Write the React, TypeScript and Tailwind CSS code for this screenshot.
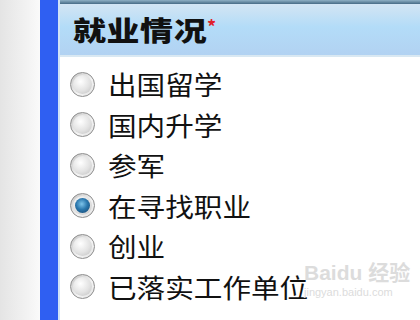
import React from "react";

const options = [
  { label: "出国留学", checked: false },
  { label: "国内升学", checked: false },
  { label: "参军", checked: false },
  { label: "在寻找职业", checked: true },
  { label: "创业", checked: false },
  { label: "已落实工作单位", checked: false },
];

function Radio({ checked }: { checked: boolean }) {
  return (
    <span className="flex h-[25px] w-[25px] shrink-0 items-center justify-center rounded-full border border-[#8e8e8e] bg-[linear-gradient(135deg,#c4c4c4,#f4f4f4_60%,#e0e0e0)]">
      <span className="flex h-[19px] w-[19px] items-center justify-center rounded-full bg-[radial-gradient(circle_at_40%_35%,#ffffff,#e2e2e2_55%,#bdbdbd)]">
        {checked && (
          <span className="h-[15px] w-[15px] rounded-full bg-[radial-gradient(circle_at_45%_40%,#7ec4ea,#2b78ae_45%,#123f66)]" />
        )}
      </span>
    </span>
  );
}

export default function App() {
  return (
    <div
      className="relative flex h-[320px] w-[420px] overflow-hidden bg-white text-[#111]"
      style={{ fontFamily: '"Noto Sans CJK SC", "Noto Sans", sans-serif' }}
    >
      <div className="w-[40px] shrink-0 bg-[linear-gradient(90deg,#e4e4e4,#f3f3f3_70%,#fafafa)]" />
      <div className="w-[18px] shrink-0 bg-[#2f5ff2]" />
      <div className="flex flex-1 flex-col border-l-2 border-[#cfe3f7]">
        <div className="h-[4px] bg-[linear-gradient(180deg,#8fb0c4,#476b85)]" />
        <div className="flex h-[53px] items-center border-b-2 border-[#d9e8f2] bg-[linear-gradient(180deg,#d3e5f3,#b3dcf8_45%,#b2d2f2)] pl-[13px]">
          <span className="inline-block w-[110px] origin-left scale-x-[1.22] text-[27px] font-black leading-none tracking-[0.5px]">
            就业情况
          </span>
          <span className="ml-[24px] mt-[-8px] text-[18px] font-bold leading-none text-[#e0202a]">*</span>
        </div>
        <ul className="flex flex-col pt-[7px] pl-[10px]">
          {options.map((o) => (
            <li key={o.label} className="flex h-[40.5px] items-center gap-[13px]">
              <Radio checked={o.checked} />
              <span className="inline-block origin-left scale-x-[1.1] whitespace-nowrap text-[26px] leading-none">
                {o.label}
              </span>
            </li>
          ))}
        </ul>
      </div>
      <div className="pointer-events-none absolute left-[304px] top-[262px] flex flex-col items-start whitespace-nowrap text-[#dcdcdc]">
        <span className="text-[21px] font-bold leading-none" style={{ fontFamily: '"Liberation Sans", "Noto Sans CJK SC", sans-serif' }}>
          Baidu 经验
        </span>
        <span className="mt-[4px] text-[11px] leading-none" style={{ fontFamily: '"Liberation Sans", sans-serif' }}>
          jingyan.baidu.com
        </span>
      </div>
    </div>
  );
}
